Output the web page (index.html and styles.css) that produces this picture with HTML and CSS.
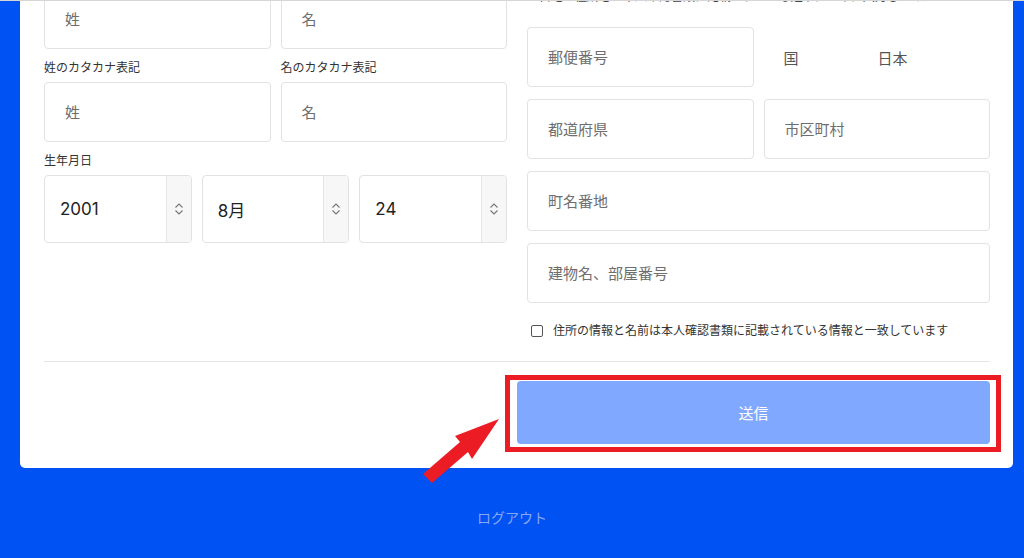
FILE: index.html
```html
<!DOCTYPE html>
<html lang="ja">
<head>
  <meta charset="UTF-8">
  <meta name="viewport" content="width=device-width, initial-scale=1.0">
  <title>本人情報の登録</title>
  <link rel="stylesheet" href="styles.css">
</head>
<body>
  <form class="card">
    <div class="columns">
      <!-- Name and birthday -->
      <div class="col">
        <div class="pair">
          <div class="field">
            <label class="label">姓</label>
            <input class="text-input" type="text" placeholder="姓">
          </div>
          <div class="field">
            <label class="label">名</label>
            <input class="text-input" type="text" placeholder="名">
          </div>
        </div>
        <div class="pair">
          <div class="field">
            <label class="label">姓のカタカナ表記</label>
            <input class="text-input" type="text" placeholder="姓">
          </div>
          <div class="field">
            <label class="label">名のカタカナ表記</label>
            <input class="text-input" type="text" placeholder="名">
          </div>
        </div>
        <label class="label">生年月日</label>
        <div class="triple">
          <div class="select"><span class="select-value">2001</span><span class="spin"><svg width="12" height="18" viewBox="0 0 12 18"><path d="M2.5 7.5 6 4 9.5 7.5M2.5 10.5 6 14 9.5 10.5" fill="none" stroke="#777" stroke-width="1.1"/></svg></span></div>
          <div class="select"><span class="select-value">8月</span><span class="spin"><svg width="12" height="18" viewBox="0 0 12 18"><path d="M2.5 7.5 6 4 9.5 7.5M2.5 10.5 6 14 9.5 10.5" fill="none" stroke="#777" stroke-width="1.1"/></svg></span></div>
          <div class="select"><span class="select-value">24</span><span class="spin"><svg width="12" height="18" viewBox="0 0 12 18"><path d="M2.5 7.5 6 4 9.5 7.5M2.5 10.5 6 14 9.5 10.5" fill="none" stroke="#777" stroke-width="1.1"/></svg></span></div>
        </div>
      </div>

      <!-- Address -->
      <div class="col">
        <label class="label">住所</label>
        <p class="note">ご自宅の住所を、本人確認書類に記載されている通りに正確に入力してください</p>
        <div class="stack">
          <div class="pair">
            <input class="text-input" type="text" placeholder="郵便番号">
            <div class="country"><span class="country-label">国</span><span>日本</span></div>
          </div>
          <div class="pair">
            <input class="text-input" type="text" placeholder="都道府県">
            <input class="text-input" type="text" placeholder="市区町村">
          </div>
          <input class="text-input" type="text" placeholder="町名番地">
          <input class="text-input" type="text" placeholder="建物名、部屋番号">
        </div>
        <label class="agree"><input type="checkbox" class="check">住所の情報と名前は本人確認書類に記載されている情報と一致しています</label>
      </div>
    </div>

    <hr class="divider">

    <div class="actions">
      <div class="submit-wrap">
        <button type="button" class="submit">送信</button>
        <span class="highlight"></span>
        <svg class="pointer" width="95" height="80" viewBox="415 410 95 80">
          <polygon points="499,419 455,436 460,442 423,474 432,483 468,452 472,459" fill="#ec1c24"/>
        </svg>
      </div>
    </div>
  </form>

  <p class="logout">ログアウト</p>
</body>
</html>
```

FILE: styles.css
```css
* {
  margin: 0;
  padding: 0;
  box-sizing: border-box;
}

body {
  background-color: #0052f2;
  border-top: 1px solid #d6d6d6;
  height: 100vh;
  overflow: hidden;
  font-family: Inter, "Noto Sans CJK JP", sans-serif;
  color: #333;
}

.card {
  background-color: #fff;
  width: 993px;
  margin: -58px 0 0 20px;
  padding: 24px 23px 24px 24px;
  border-radius: 0 0 5px 5px;
}

.columns {
  display: grid;
  grid-template-columns: 1fr 1fr;
  gap: 20px;
  padding-bottom: 22px;
}

.label {
  display: block;
  font-size: 12px;
  line-height: 16px;
  margin-bottom: 6px;
  color: #333;
}

.pair {
  display: grid;
  grid-template-columns: 1fr 1fr;
  gap: 10px;
}

.col > .pair + .pair,
.col > .pair + .label {
  margin-top: 11px;
}

.text-input {
  display: block;
  width: 100%;
  height: 60px;
  padding: 0 20px;
  border: 1px solid #e2e2e4;
  border-radius: 4px;
  font-family: inherit;
  font-size: 15px;
  color: #222;
  background: #fff;
}

.text-input::placeholder {
  color: #6e6e6e;
}

.triple {
  display: grid;
  grid-template-columns: 1fr 1fr 1fr;
  gap: 10px;
}

.select {
  display: flex;
  height: 68px;
  border: 1px solid #e2e2e4;
  border-radius: 4px;
  overflow: hidden;
}

.select-value {
  flex: 1;
  display: flex;
  align-items: center;
  padding-left: 15px;
  font-size: 17px;
  color: #222;
}

.spin {
  width: 25px;
  display: flex;
  align-items: center;
  justify-content: center;
  background-color: #f7f7f8;
  border-left: 1px solid #e6e6e8;
}

.note {
  font-size: 12px;
  line-height: 16px;
  margin-bottom: 22px;
  color: #444;
}

.stack {
  display: flex;
  flex-direction: column;
  gap: 12px;
}

.country {
  display: flex;
  align-items: center;
  padding-left: 20px;
  font-size: 15px;
  color: #555;
}

.country-label {
  width: 94px;
}

.agree {
  display: flex;
  align-items: center;
  margin-top: 20px;
  padding-left: 4px;
  font-size: 12px;
  line-height: 16px;
  color: #333;
}

.check {
  appearance: none;
  width: 12px;
  height: 12px;
  border: 1px solid #555;
  border-radius: 2px;
  margin-right: 10px;
}

.divider {
  border: none;
  border-top: 1px solid #e6e6e8;
  margin-bottom: 19px;
}

.actions {
  display: flex;
  justify-content: flex-end;
}

.submit-wrap {
  position: relative;
  width: 473px;
}

.submit {
  display: block;
  width: 100%;
  height: 63px;
  border: none;
  border-radius: 4px;
  background-color: #80a8ff;
  color: #fff;
  font-family: inherit;
  font-size: 15px;
}

.highlight {
  position: absolute;
  top: -6px;
  left: -12px;
  right: -11px;
  bottom: -8px;
  border: 5px solid #ec1c24;
}

.pointer {
  position: absolute;
  left: -102px;
  top: 29px;
}

.logout {
  text-align: center;
  margin-top: 39px;
  font-size: 14px;
  color: #86a9f7;
}
```
